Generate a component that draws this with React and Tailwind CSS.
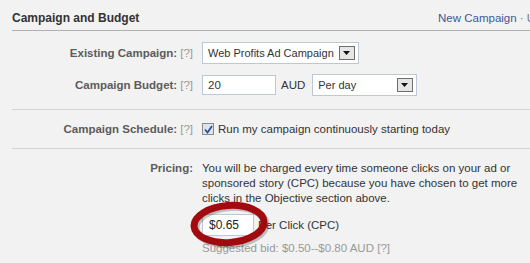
import React from 'react';

const Help = () => <span className="ml-[3px] font-normal text-[#999]">[?]</span>;

const Arrow = () => (
  <span className="flex h-[14px] w-[16px] shrink-0 items-center justify-center border border-[#6d6d6d] bg-[#e6e6e6]">
    <svg width="8" height="4" viewBox="0 0 8 4">
      <path d="M0 0h7L3.5 4z" fill="#111" />
    </svg>
  </span>
);

const Select = ({ value, width }) => (
  <div className={`flex h-[22px] items-center justify-between whitespace-nowrap border border-[#bdc7d8] bg-white pl-[5px] pr-[3px] ${width}`}>
    <span className="text-[11px] text-[#333]">{value}</span>
    <Arrow />
  </div>
);

const Label = ({ children, help = true }) => (
  <div className="flex items-center justify-end whitespace-nowrap font-bold text-[#5b5b5b]">
    {children}
    {help && <Help />}
  </div>
);

export default function App() {
  return (
    <div className="relative h-[263px] w-[530px] overflow-hidden bg-[#f2f2f2] font-['Liberation_Sans',Arial,sans-serif] text-[11.5px] text-[#333]">
      <div className="ml-[12px]">
        {/* header */}
        <div className="flex h-[31px] items-start border-b border-[#b0b0b0] pt-[11px] leading-[14px]">
          <div className="w-[426px] shrink-0 text-[12px] font-bold text-[#333]">Campaign and Budget</div>
          <div className="w-[92px] shrink-0 overflow-hidden whitespace-nowrap text-[#3b5998]">
            New Campaign <span className="text-[#777]">· Us</span>
          </div>
        </div>

        {/* campaign + budget */}
        <div className="grid grid-cols-[181px_1fr] gap-x-[9px] gap-y-[10px] pt-[11px] pb-[13px] leading-[14px]">
          <Label>Existing Campaign:</Label>
          <Select value="Web Profits Ad Campaign" width="w-[157px]" />

          <Label>Campaign Budget:</Label>
          <div className="flex items-center">
            <div className="flex h-[20px] w-[74px] items-center border border-[#bdc7d8] bg-white pl-[5px]">20</div>
            <span className="ml-[5px] mr-[7px] text-[#333]">AUD</span>
            <Select value="Per day" width="w-[105px]" />
          </div>
        </div>

        {/* schedule */}
        <div className="grid grid-cols-[181px_1fr] gap-x-[9px] border-t border-[#d4d4d4] py-[12px] leading-[14px]">
          <Label>Campaign Schedule:</Label>
          <div className="flex items-center">
            <span className="flex h-[12px] w-[12px] items-center justify-center border border-[#8a8a8a] bg-[#dfe3ea]">
              <svg width="9" height="9" viewBox="0 0 9 9">
                <path d="M1 4.5l2.5 3L8 1" fill="none" stroke="#2d4f9e" strokeWidth="1.8" />
              </svg>
            </span>
            <span className="ml-[4px]">Run my campaign continuously starting today</span>
          </div>
        </div>

        {/* pricing */}
        <div className="grid grid-cols-[181px_1fr] gap-x-[9px] border-t border-[#d4d4d4] pt-[12px] leading-[15px]">
          <Label help={false}>
            <span className="self-start">Pricing:</span>
          </Label>
          <div>
            <p className="whitespace-nowrap">
              You will be charged every time someone clicks on your ad or
              <br />
              sponsored story (CPC) because you have chosen to get more
              <br />
              clicks in the Objective section above.
            </p>
            <div className="mt-[8px] flex items-center">
              <div className="flex h-[22px] w-[52px] items-center border border-[#bdc7d8] bg-white pl-[6px] text-[12px] text-[#222]">$0.65</div>
              <span className="ml-[4px]">Per Click (CPC)</span>
            </div>
            <div className="mt-[5px] text-[#999]">
              Suggested bid: $0.50--$0.80 AUD <span>[?]</span>
            </div>
          </div>
        </div>
      </div>

      {/* hand-drawn highlight */}
      <svg className="absolute left-[188px] top-[200px]" width="84" height="50" viewBox="0 0 84 50">
        <ellipse cx="43" cy="26" rx="35" ry="18.5" fill="none" stroke="#000" strokeOpacity="0.22" strokeWidth="7" transform="rotate(-4 43 26)" />
        <ellipse cx="41" cy="24" rx="35" ry="18.5" fill="none" stroke="#a10b10" strokeWidth="7" transform="rotate(-4 41 24)" />
      </svg>
    </div>
  );
}
